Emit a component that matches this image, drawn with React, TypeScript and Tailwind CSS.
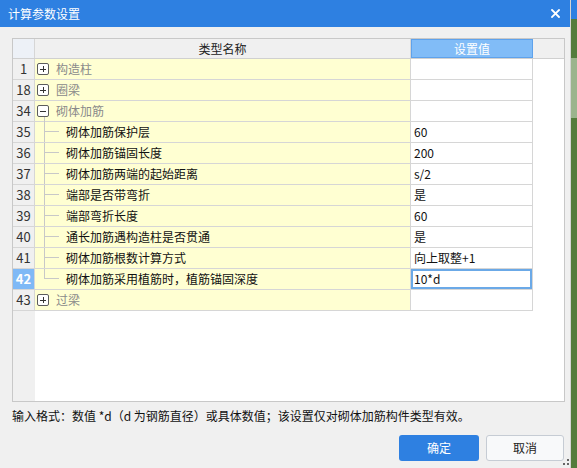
import React from "react";

type Row = {
  no: number;
  name: string;
  value?: string;
  kind: "group" | "open" | "child";
  last?: boolean;
  active?: boolean;
};

const rows: Row[] = [
  { no: 1, name: "构造柱", kind: "group" },
  { no: 18, name: "圈梁", kind: "group" },
  { no: 34, name: "砌体加筋", kind: "open" },
  { no: 35, name: "砌体加筋保护层", value: "60", kind: "child" },
  { no: 36, name: "砌体加筋锚固长度", value: "200", kind: "child" },
  { no: 37, name: "砌体加筋两端的起始距离", value: "s/2", kind: "child" },
  { no: 38, name: "端部是否带弯折", value: "是", kind: "child" },
  { no: 39, name: "端部弯折长度", value: "60", kind: "child" },
  { no: 40, name: "通长加筋遇构造柱是否贯通", value: "是", kind: "child" },
  { no: 41, name: "砌体加筋根数计算方式", value: "向上取整+1", kind: "child" },
  { no: 42, name: "砌体加筋采用植筋时，植筋锚固深度", value: "10*d", kind: "child", last: true, active: true },
  { no: 43, name: "过梁", kind: "group" },
];

function ToggleBox({ open }: { open?: boolean }) {
  return (
    <div className="relative ml-[2px] flex h-[12px] w-[12px] items-center justify-center rounded-[2px] border border-[#5c5c5c] bg-white">
      <div className="absolute h-px w-[6px] bg-[#333]" />
      {!open && <div className="absolute h-[6px] w-px bg-[#333]" />}
    </div>
  );
}

function GridRow({ row }: { row: Row }) {
  return (
    <div className="flex h-[21px]">
      <div
        className={`flex w-[22px] items-center justify-center border-b border-r border-[#d6d6d6] text-[13px] ${
          row.active ? "bg-[#7fb9f6] font-bold text-white" : "bg-[#f0f0f0] text-[#333]"
        }`}
      >
        {row.no}
      </div>
      <div className="relative flex w-[376px] items-center border-b border-r border-[#d6d6d6] bg-[#ffffd2]">
        {row.kind === "child" ? (
          <>
            <div className="ml-[9px] flex h-full w-[15px] flex-col">
              <div className="h-[10px] border-b border-l border-[#c8c8c8]" />
              <div className={`flex-1 ${row.last ? "" : "border-l border-[#c8c8c8]"}`} />
            </div>
            <span className="ml-[7px] text-[#111]">{row.name}</span>
          </>
        ) : (
          <>
            <ToggleBox open={row.kind === "open"} />
            {row.kind === "open" && (
              <div className="absolute bottom-[-1px] left-[9px] top-[16px] border-l border-[#c8c8c8]" />
            )}
            <span className="ml-[7px] text-[#8a8a8a]">{row.name}</span>
          </>
        )}
      </div>
      <div
        className={`flex w-[122px] items-center border-b border-r border-[#d6d6d6] bg-white pl-[3px] text-[#111] ${
          row.active ? "shadow-[inset_0_0_0_2px_#6ba9e7]" : ""
        }`}
      >
        {row.value}
      </div>
      <div className="flex-1 bg-white" />
    </div>
  );
}

export default function App() {
  return (
    <div
      className="flex h-[468px] w-[577px] overflow-hidden text-[12px]"
      style={{ fontFamily: '"Noto Sans CJK SC", "Noto Sans", sans-serif' }}
    >
      <div className="relative flex w-[571px] flex-col border-r border-[#d4d4d4] bg-[#f0f0f0]">
        <div className="flex h-[27px] items-center justify-between bg-[#2e80e1] pl-[8px] pr-[8px] text-[12px] text-white">
          <span>计算参数设置</span>
          <svg width="9" height="9" viewBox="0 0 9 9" className="mr-[2px]">
            <path d="M1 1L8 8M8 1L1 8" stroke="white" strokeWidth="1.8" strokeLinecap="square" />
          </svg>
        </div>

        <div className="ml-[12px] mt-[11px] flex h-[364px] w-[553px] flex-col border border-[#c8c8c8] bg-white">
          <div className="flex h-[20px] border-b border-[#d0d0d0] bg-[#f0f0f0]">
            <div className="w-[22px] border-r border-[#d6d6d6] bg-[#edf1f7]" />
            <div className="flex w-[376px] items-center justify-center border-r border-[#d6d6d6] text-[#222]">
              类型名称
            </div>
            <div className="flex w-[122px] items-center justify-center border border-[#5ea2ec] bg-[#81bcf7] text-white">
              设置值
            </div>
            <div className="flex-1" />
          </div>
          {rows.map((r) => (
            <GridRow key={r.no} row={r} />
          ))}
          <div className="flex flex-1">
            <div className="w-[22px] bg-[#f0f0f0]" />
            <div className="flex-1" />
          </div>
        </div>

        <div className="ml-[12px] mt-[5px] leading-[18px] text-[#111]">
          输入格式：数值 *d（d 为钢筋直径）或具体数值；该设置仅对砌体加筋构件类型有效。
        </div>

        <div className="mt-[10px] flex justify-end gap-[7px] pr-[6px]">
          <button className="h-[26px] w-[80px] rounded-[3px] bg-[#2e80e1] text-[12px] text-white">确定</button>
          <button className="h-[26px] w-[78px] rounded-[3px] border border-[#c6ccd4] bg-[#f8f9fa] text-[12px] text-[#222]">
            取消
          </button>
        </div>

        <svg width="6" height="6" viewBox="0 0 6 6" className="absolute bottom-[3px] right-[1px]">
          <rect x="4" y="0" width="2" height="2" fill="#666" />
          <rect x="0" y="4" width="2" height="2" fill="#666" />
          <rect x="4" y="4" width="2" height="2" fill="#666" />
        </svg>
      </div>

      <div className="flex w-[6px] flex-col">
        <div className="h-[19px] bg-[#2e80e1]" />
        <div className="h-[39px] bg-[#547c3c]" />
        <div className="h-[60px] bg-[#9bb48d]" />
        <div className="flex-1 bg-[#547c3c]" />
      </div>
    </div>
  );
}
